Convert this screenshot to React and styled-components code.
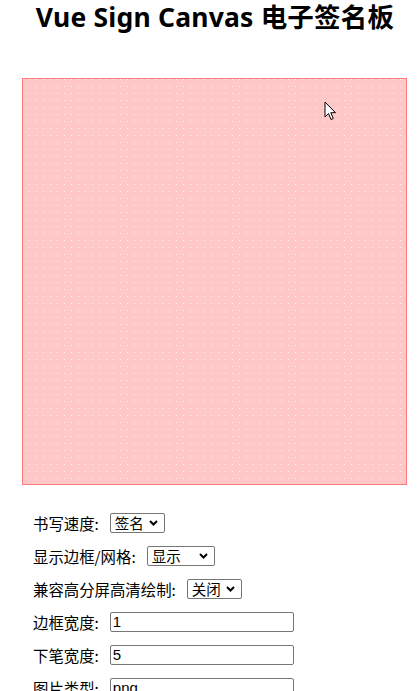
import React from 'react';
import styled, { createGlobalStyle } from 'styled-components';

const GlobalStyle = createGlobalStyle`
  html, body {
    margin: 0;
    padding: 0;
    background: #fff;
  }
  body {
    font-family: "Noto Sans CJK SC", "Liberation Sans", sans-serif;
    color: #000;
  }
`;

const Page = styled.div`
  width: 418px;
  overflow: hidden;
`;

const Title = styled.h1`
  margin: 0;
  padding: 2px 0 0 12px;
  height: 78px;
  box-sizing: border-box;
  text-align: center;
  font-family: "Noto Sans", "Noto Sans CJK SC", sans-serif;
  font-weight: 700;
  font-size: 26.5px;
  letter-spacing: 0.2px;
  line-height: 30px;
  white-space: nowrap;
`;

const Board = styled.div`
  position: relative;
  margin-left: 22px;
  width: 385px;
  height: 407px;
  box-sizing: border-box;
  border: 1px solid #ff7b7d;
  background-color: #fec8c8;
  background-image: radial-gradient(rgba(255, 255, 255, 0.8) 0.6px, transparent 1px);
  background-size: 7px 7px;
  background-position: 3px 4px;
`;

const Cursor = styled.svg`
  position: absolute;
  left: 301px;
  top: 22px;
  width: 13px;
  height: 20px;
`;

const Form = styled.div`
  padding: 21px 0 0 33px;
`;

const Row = styled.div`
  display: flex;
  align-items: center;
  height: 33px;
  font-size: 15.4px;
  white-space: nowrap;
`;

const Label = styled.span`
  margin-right: 11px;
`;

const SelectBox = styled.div`
  display: flex;
  align-items: center;
  justify-content: space-between;
  width: ${p => p.w}px;
  height: 20px;
  box-sizing: border-box;
  padding: 0 6px 0 4px;
  border: 1px solid #767676;
  border-radius: 2px;
  background: #fff;
  font-size: 14.5px;
  line-height: 18px;
  cursor: default;
`;

const Chevron = styled.svg`
  width: 9px;
  height: 6px;
  flex: none;
`;

const Input = styled.input`
  width: 184px;
  height: 20px;
  box-sizing: border-box;
  font-family: "Liberation Sans", Arial, sans-serif;
  font-size: 15px;
  padding: 0 2px;
  margin: 0;
  border: 1px solid #767676;
  border-radius: 2px;
  color: #000;
`;

function Select({ w, value }) {
  return (
    <SelectBox w={w} role="combobox">
      <span>{value}</span>
      <Chevron viewBox="0 0 9 6">
        <path d="M1 1 L4.5 4.5 L8 1" fill="none" stroke="#000" strokeWidth="2" />
      </Chevron>
    </SelectBox>
  );
}

export default function App() {
  return (
    <Page>
      <GlobalStyle />
      <Title>Vue Sign Canvas 电子签名板</Title>
      <Board>
        <Cursor viewBox="0 0 13 20">
          <path d="M1 1 L1 16 L4.5 12.5 L7 18.5 L9.3 17.5 L6.8 11.7 L11.5 11.7 Z" fill="#fff" stroke="#000" strokeWidth="1" strokeLinejoin="miter" />
        </Cursor>
      </Board>
      <Form>
        <Row>
          <Label>书写速度:</Label>
          <Select w={55} value="签名" />
        </Row>
        <Row>
          <Label>显示边框/网格:</Label>
          <Select w={68} value="显示" />
        </Row>
        <Row>
          <Label>兼容高分屏高清绘制:</Label>
          <Select w={55} value="关闭" />
        </Row>
        <Row>
          <Label>边框宽度:</Label>
          <Input defaultValue="1" />
        </Row>
        <Row>
          <Label>下笔宽度:</Label>
          <Input defaultValue="5" />
        </Row>
        <Row>
          <Label>图片类型:</Label>
          <Input defaultValue="png" />
        </Row>
        <Row>
          <Label>图片质量:</Label>
          <Input defaultValue="1" />
        </Row>
      </Form>
    </Page>
  );
}
